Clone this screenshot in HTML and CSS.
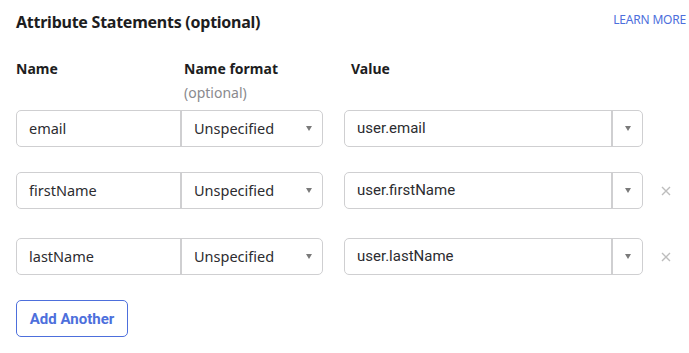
FILE: index.html
```html
<!DOCTYPE html>
<html>
<head>
<meta charset="utf-8">
<link rel="stylesheet" href="styles.css">
</head>
<body>
<div class="panel">
  <div class="top">
    <h2 class="title">Attribute Statements (optional)</h2>
    <a class="learn">LEARN MORE</a>
  </div>
  <div class="heads">
    <div class="h h-name">Name</div>
    <div class="h h-format">Name format<span class="opt">(optional)</span></div>
    <div class="h h-value">Value</div>
  </div>
  <div class="row r1">
    <div class="pair">
      <div class="field name">email</div>
      <div class="field select">Unspecified<span class="caret"></span></div>
    </div>
    <div class="combo"><span class="cval">user.email</span><span class="cbtn"><span class="caret"></span></span></div>
  </div>
  <div class="row r2">
    <div class="pair">
      <div class="field name">firstName</div>
      <div class="field select">Unspecified<span class="caret"></span></div>
    </div>
    <div class="combo"><span class="cval">user.firstName</span><span class="cbtn"><span class="caret"></span></span></div>
    <span class="remove"><svg width="10" height="10" viewBox="0 0 10 10"><path d="M1 1L9 9M9 1L1 9" stroke="#bdbdbd" stroke-width="1.4"/></svg></span>
  </div>
  <div class="row r3">
    <div class="pair">
      <div class="field name">lastName</div>
      <div class="field select">Unspecified<span class="caret"></span></div>
    </div>
    <div class="combo"><span class="cval">user.lastName</span><span class="cbtn"><span class="caret"></span></span></div>
    <span class="remove"><svg width="10" height="10" viewBox="0 0 10 10"><path d="M1 1L9 9M9 1L1 9" stroke="#bdbdbd" stroke-width="1.4"/></svg></span>
  </div>
  <button class="add">Add Another</button>
</div>
</body>
</html>
```
FILE: styles.css
```css
html, body { margin: 0; padding: 0; background: #fff; }
body { font-family: "Noto Sans", "DejaVu Sans", sans-serif; color: #2c2c30; }
.panel { padding: 10px 3px 0 16px; }
.top { display: flex; justify-content: space-between; align-items: center; height: 24px; }
.title { margin: 0; font-size: 16px; font-weight: 700; color: #1d1d21; letter-spacing: -0.25px; }
.learn { font-family: "Noto Sans", sans-serif; font-size: 12px; color: #4d6fdc; letter-spacing: -0.2px; margin-top: -6px; }
.heads { display: flex; margin-top: 26px; height: 49px; }
.h { font-size: 14px; font-weight: 700; color: #1d1d21; line-height: 18px; }
.h-name { width: 168px; }
.h-format { width: 167px; }
.opt { display: block; font-weight: 400; color: #8a8a8e; margin-top: 6px; }
.row { display: flex; align-items: center; height: 38px; }
.r2 { margin-top: 24px; }
.r3 { margin-top: 28px; }
.pair { display: flex; width: 307px; height: 37px; border: 1px solid #cfcfd1; border-radius: 5px; box-sizing: border-box; }
.field { display: flex; align-items: center; font-size: 14.5px; color: #2c2c30; box-sizing: border-box; }
.name { width: 165px; padding-left: 12px; border-right: 2px solid #cfcfd1; }
.select { flex: 1; padding-left: 12px; justify-content: space-between; padding-right: 10px; }
.caret { width: 0; height: 0; border-left: 3.5px solid transparent; border-right: 3.5px solid transparent; border-top: 5px solid #7a7a7a; }
.combo { display: flex; width: 299px; height: 37px; margin-left: 21px; border: 1px solid #cfcfd1; border-radius: 5px; box-sizing: border-box; }
.cval { flex: 1; display: flex; align-items: center; padding-left: 12px; font-family: Roboto, sans-serif; font-size: 15px; color: #2c2c30; border-right: 2px solid #cfcfd1; }
.cbtn { width: 29px; display: flex; align-items: center; justify-content: center; }
.remove { margin-left: 18px; display: flex; margin-top: 2px; }
.add { margin-top: 25px; height: 37px; width: 112px; border: 1px solid #4d6fdc; border-radius: 5px; background: #fff; color: #4d6fdc; font-family: Roboto, sans-serif; font-weight: 700; font-size: 15px; padding: 0; }
```
